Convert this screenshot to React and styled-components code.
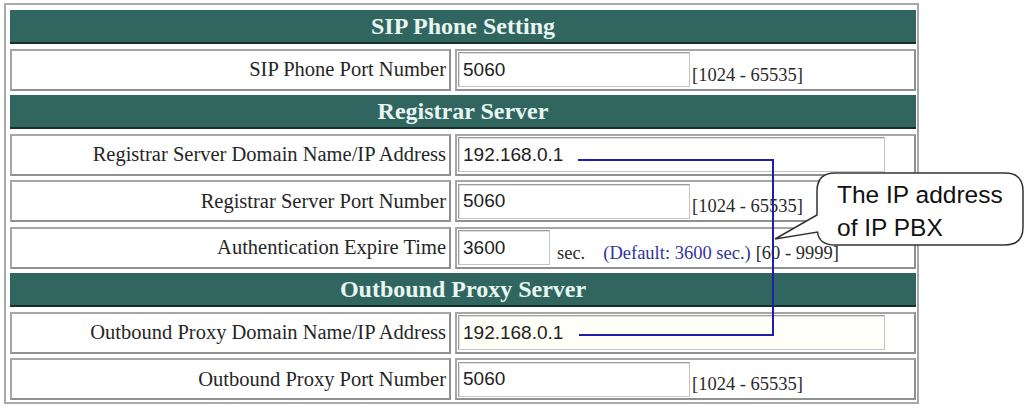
import React from "react";
import styled, { createGlobalStyle } from "styled-components";

const Global = createGlobalStyle`
  * { box-sizing: border-box; }
  html, body { margin: 0; padding: 0; background: #ffffff; }
  body { width: 1026px; height: 406px; overflow: hidden; }
`;

const Page = styled.div`
  position: relative;
  width: 1026px;
  height: 406px;
`;

const Frame = styled.div`
  display: grid;
  grid-template-columns: 441px 461px;
  column-gap: 4px;
  row-gap: 4.5px;
  width: max-content;
  margin: 3px 0 0 4px;
  padding: 5px 1px 2px 4px;
  border: 2px solid #a9a9a9;
`;

const SectionHead = styled.div`
  grid-column: 1 / -1;
  height: 34px;
  display: flex;
  align-items: center;
  justify-content: center;
  background: #30665f;
  border-bottom: 2px solid #16302c;
  color: #e9f5f1;
  font-family: "Liberation Serif", "Times New Roman", serif;
  font-weight: bold;
  font-size: 24px;
  padding-top: 1px;
`;

const LabelCell = styled.div`
  height: 42px;
  display: flex;
  align-items: center;
  justify-content: flex-end;
  padding-right: 3px;
  border: 2px solid;
  border-color: #a6a6a6 #909090 #909090 #a6a6a6;
  background: #ffffff;
  color: #262626;
  font-family: "Liberation Serif", "Times New Roman", serif;
  font-size: 20.5px;
  white-space: nowrap;
`;

const ValueCell = styled.div`
  height: 42px;
  display: flex;
  align-items: center;
  padding-left: 1px;
  border: 2px solid;
  border-color: #a6a6a6 #909090 #909090 #a6a6a6;
  background: #ffffff;
  white-space: nowrap;
`;

const Field = styled.input`
  width: ${(p) => p.$w}px;
  height: 35px;
  margin: 0;
  padding: 0 0 0 4px;
  border: 1px solid;
  border-color: #9c9c9c #c4c4c4 #c4c4c4 #9c9c9c;
  box-shadow: inset 1px 1px 0 #dedede;
  background: ${(p) => (p.$tint ? "#fffff7" : "#ffffff")};
  color: #222222;
  font-family: "Liberation Sans", Arial, sans-serif;
  font-size: 19px;
  outline: none;
`;

const Hint = styled.span`
  align-self: flex-end;
  padding-bottom: 3px;
  margin-left: ${(p) => p.$gap ?? 2}px;
  color: ${(p) => (p.$blue ? "#33339c" : "#2a2a2a")};
  font-family: "Liberation Serif", "Times New Roman", serif;
  font-size: 18.5px;
`;

const Overlay = styled.svg`
  position: absolute;
  left: 0;
  top: 0;
  pointer-events: none;
`;

const Note = styled.div`
  position: absolute;
  left: 837px;
  top: 175px;
  color: #111111;
  font-family: "Liberation Sans", Arial, sans-serif;
  font-size: 24.5px;
  line-height: 33px;
  white-space: nowrap;
`;

const Row = ({ label, children }) => (
  <>
    <LabelCell>{label}</LabelCell>
    <ValueCell>{children}</ValueCell>
  </>
);

export default function App() {
  return (
    <Page>
      <Global />
      <Frame>
        <SectionHead>SIP Phone Setting</SectionHead>
        <Row label="SIP Phone Port Number">
          <Field $w={232} value="5060" readOnly />
          <Hint>[1024 - 65535]</Hint>
        </Row>

        <SectionHead>Registrar Server</SectionHead>
        <Row label="Registrar Server Domain Name/IP Address">
          <Field $w={427} value="192.168.0.1" readOnly />
        </Row>
        <Row label="Registrar Server Port Number">
          <Field $w={232} value="5060" readOnly />
          <Hint>[1024 - 65535]</Hint>
        </Row>
        <Row label="Authentication Expire Time">
          <Field $w={92} value="3600" readOnly />
          <Hint $gap={7}>sec.</Hint>
          <Hint $gap={18} $blue>(Default: 3600 sec.)</Hint>
          <Hint $gap={5}>[60 - 9999]</Hint>
        </Row>

        <SectionHead>Outbound Proxy Server</SectionHead>
        <Row label="Outbound Proxy Domain Name/IP Address">
          <Field $w={427} $tint value="192.168.0.1" readOnly />
        </Row>
        <Row label="Outbound Proxy Port Number">
          <Field $w={232} value="5060" readOnly />
          <Hint>[1024 - 65535]</Hint>
        </Row>
      </Frame>

      {/* connector from both address fields to the callout */}
      <Overlay width="1026" height="406" viewBox="0 0 1026 406">
        <polyline
          points="578,157 773,157 773,332 579,332"
          fill="none"
          stroke="#1e1eaa"
          strokeWidth="2"
        />
        <path
          d="M835 170 H1005 Q1023 170 1023 188 V224 Q1023 242 1005 242 H835 Q819 242 817.5 229 L775 236 L817 212 V188 Q817 170 835 170 Z"
          fill="#ffffff"
          stroke="#333333"
          strokeWidth="1.5"
        />
      </Overlay>
      <Note>
        The IP address
        <br />
        of IP PBX
      </Note>
    </Page>
  );
}
